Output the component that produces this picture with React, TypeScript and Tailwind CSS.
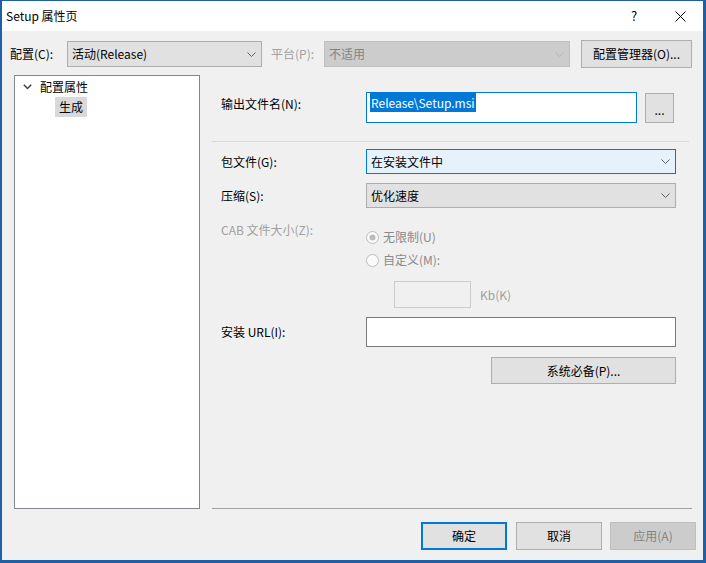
import React from 'react';

const Chevron = ({ color = '#606060' }: { color?: string }) => (
  <svg width="9" height="5" viewBox="0 0 9 5" className="shrink-0">
    <polyline points="0.5,0.5 4.5,4.5 8.5,0.5" fill="none" stroke={color} strokeWidth="1" />
  </svg>
);

const Radio = ({ checked }: { checked?: boolean }) => (
  <svg width="13" height="13" viewBox="0 0 13 13" className="shrink-0">
    <circle cx="6.5" cy="6.5" r="6" fill="#fafafa" stroke="#bcbcbc" strokeWidth="1" />
    {checked && <circle cx="6.5" cy="6.5" r="3" fill="#bcbcbc" />}
  </svg>
);

export default function App() {
  return (
    <div className="w-[706px] h-[563px] flex flex-col bg-[#f0f0f0] border-l-2 border-r-[3px] border-b-[3px] border-t border-[#1f5fa6] font-['Noto_Sans_CJK_SC',sans-serif] text-[12px] leading-4 text-black overflow-hidden">
      {/* title bar */}
      <div className="h-[30px] bg-white flex items-center pl-[4px] shrink-0">
        <span>Setup 属性页</span>
        <div className="ml-auto flex h-full">
          <div className="w-[46px] h-full flex items-center justify-center text-[13px]">?</div>
          <div className="w-[46px] h-full flex items-center justify-center">
            <svg width="11" height="11" viewBox="0 0 11 11">
              <path d="M0.5 0.5 L10.5 10.5 M10.5 0.5 L0.5 10.5" stroke="#000" strokeWidth="1" />
            </svg>
          </div>
        </div>
      </div>

      {/* configuration row */}
      <div className="flex items-center mt-[9px] h-[28px] pl-[8px] shrink-0">
        <span className="w-[57px]">配置(C):</span>
        <div className="w-[195px] h-[26px] flex items-center justify-between pl-[4px] pr-[5px] bg-[#e1e1e1] border border-[#adadad]">
          <span>活动(Release)</span>
          <Chevron />
        </div>
        <span className="ml-[9px] w-[53px] text-[#a0a0a0]">平台(P):</span>
        <div className="w-[246px] h-[26px] flex items-center justify-between pl-[4px] pr-[5px] bg-[#cccccc] border border-[#bfbfbf] text-[#838383]">
          <span>不适用</span>
          <Chevron color="#b5b5b5" />
        </div>
        <button className="ml-[11px] w-[111px] h-[28px] bg-[#e1e1e1] border border-[#adadad]">配置管理器(O)...</button>
      </div>

      {/* main */}
      <div className="flex mt-[7px] h-[434px] pl-[12px] shrink-0">
        <div className="w-[186px] h-full border border-[#828790] bg-white pt-[1px]">
          <div className="h-[20px] flex items-center pl-[8px]">
            <svg width="9" height="6" viewBox="0 0 9 6">
              <polyline points="0.8,0.8 4.5,4.5 8.2,0.8" fill="none" stroke="#404040" strokeWidth="1.5" />
            </svg>
            <span className="ml-[8px]">配置属性</span>
          </div>
          <div className="h-[20px] flex items-center pl-[40px]">
            <span className="h-[20px] px-[4px] flex items-center bg-[#d9d9d9]">生成</span>
          </div>
        </div>

        <div className="ml-[12px] w-[480px] h-full flex flex-col border-b border-[#a0a0a0]">
          {/* output file */}
          <div className="flex items-start mt-[17px] ml-[9px]">
            <span className="w-[145px] pt-[4px]">输出文件名(N):</span>
            <div className="w-[271px] h-[31px] border border-[#0078d7] bg-white">
              <span className="inline-block ml-[3px] px-[1px] leading-[19px] bg-[#0078d7] text-white">Release\Setup.msi</span>
            </div>
            <button className="ml-[8px] mt-[1px] w-[29px] h-[30px] bg-[#e1e1e1] border border-[#adadad] leading-4 pt-[3px]">...</button>
          </div>

          <div className="mt-[18px] w-[477px] h-px bg-[#d9d9d9]" />

          {/* package */}
          <div className="flex items-center mt-[7px] ml-[9px]">
            <span className="w-[145px]">包文件(G):</span>
            <div className="w-[310px] h-[25px] flex items-center justify-between pl-[4px] pr-[5px] bg-[#e5f1fb] border border-[#0078d7]">
              <span>在安装文件中</span>
              <Chevron />
            </div>
          </div>

          {/* compression */}
          <div className="flex items-center mt-[9px] ml-[9px]">
            <span className="w-[145px]">压缩(S):</span>
            <div className="w-[310px] h-[25px] flex items-center justify-between pl-[4px] pr-[5px] bg-[#e1e1e1] border border-[#adadad]">
              <span>优化速度</span>
              <Chevron />
            </div>
          </div>

          {/* cab size */}
          <div className="flex items-start mt-[14px] ml-[9px]">
            <span className="w-[145px] text-[#a0a0a0]">CAB 文件大小(Z):</span>
            <div className="flex flex-col pt-[7px] text-[#8a8a8a]">
              <div className="h-[16px] flex items-center gap-[4px]">
                <Radio checked />
                <span>无限制(U)</span>
              </div>
              <div className="h-[16px] mt-[7px] flex items-center gap-[4px]">
                <Radio />
                <span>自定义(M):</span>
              </div>
              <div className="flex items-center mt-[13px] ml-[28px]">
                <div className="w-[77px] h-[27px] border border-[#cccccc] bg-[#f0f0f0]" />
                <span className="ml-[9px] text-[#a0a0a0]">Kb(K)</span>
              </div>
            </div>
          </div>

          {/* url */}
          <div className="flex items-center mt-[9px] ml-[9px]">
            <span className="w-[145px]">安装 URL(I):</span>
            <div className="w-[310px] h-[30px] border border-[#7a7a7a] bg-white" />
          </div>

          <div className="flex mt-[10px] ml-[9px]">
            <div className="w-[145px]" />
            <div className="w-[310px] flex justify-end">
              <button className="w-[185px] h-[27px] bg-[#e1e1e1] border border-[#adadad]">系统必备(P)...</button>
            </div>
          </div>
        </div>
      </div>

      {/* footer */}
      <div className="flex justify-end mt-[13px] pr-[7px] shrink-0">
        <button className="w-[86px] h-[28px] bg-[#e1e1e1] border-2 border-[#0078d7]">确定</button>
        <button className="ml-[9px] w-[86px] h-[28px] bg-[#e1e1e1] border border-[#adadad]">取消</button>
        <button className="ml-[8px] w-[86px] h-[28px] bg-[#cccccc] border border-[#bfbfbf] text-[#838383]">应用(A)</button>
      </div>
    </div>
  );
}
